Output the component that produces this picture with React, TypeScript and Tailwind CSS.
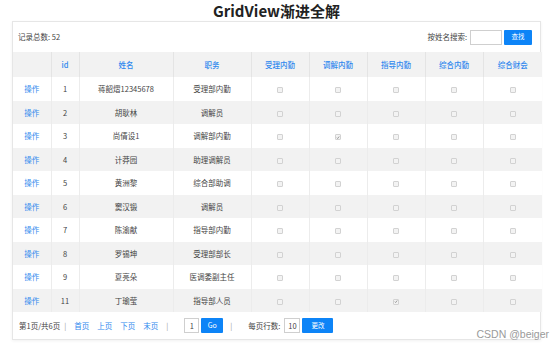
import React from "react";

const rows = [
  { id: 1, name: "蒋韶熠12345678", job: "受理部内勤", checks: [0, 0, 0, 0, 0] },
  { id: 2, name: "胡耿林", job: "调解员", checks: [0, 0, 0, 0, 0] },
  { id: 3, name: "尚倩设1", job: "调解部内勤", checks: [0, 1, 0, 0, 0] },
  { id: 4, name: "计莽园", job: "助理调解员", checks: [0, 0, 0, 0, 0] },
  { id: 5, name: "黄洲黎", job: "综合部助调", checks: [0, 0, 0, 0, 0] },
  { id: 6, name: "窦汉锻", job: "调解员", checks: [0, 0, 0, 0, 0] },
  { id: 7, name: "陈渝献", job: "指导部内勤", checks: [0, 0, 0, 0, 0] },
  { id: 8, name: "罗锡坤", job: "受理部部长", checks: [0, 0, 0, 0, 0] },
  { id: 9, name: "夏亮朵", job: "医调委副主任", checks: [0, 0, 0, 0, 0] },
  { id: 11, name: "丁瑜莹", job: "指导部人员", checks: [0, 0, 1, 0, 0] },
];

const heads = ["", "id", "姓名", "职务", "受理内勤", "调解内勤", "指导内勤", "综合内勤", "综合财会"];
const widths = [38, 28, 94, 78, 58, 58, 58, 58, 59];

const Check = ({ on }: { on: boolean }) => (
  <span className="inline-flex items-center justify-center w-[6px] h-[6px] border border-[#d2d2d2] bg-[#f3f3f3] rounded-[1px] align-middle">
    {on && (
      <svg width="5" height="5" viewBox="0 0 10 10">
        <path d="M2 5.5 L4 7.5 L8 2.5" fill="none" stroke="#777" strokeWidth="1.8" />
      </svg>
    )}
  </span>
);

const Sep = ({ className = "" }: { className?: string }) => (
  <span className={`text-[#9aa0a6] ${className}`}>|</span>
);

export default function App() {
  return (
    <div
      className="relative w-[554px] h-[348px] bg-white text-[#444] overflow-hidden"
      style={{ fontFamily: '"Noto Sans CJK SC", "Noto Sans", sans-serif' }}
    >
      <h1 className="h-[21px] pl-[12px] w-[541px] text-center text-[15px] font-bold leading-[22px] text-[#222]">
        GridView渐进全解
      </h1>

      <div className="ml-[12px] w-[529px] border border-[#e6e6e6] shadow-[0_1px_3px_rgba(0,0,0,0.06)] text-[7.5px]">
        <div className="h-[30px] flex items-center justify-between pl-[5px] pr-[8px]">
          <span>记录总数: 52</span>
          <div className="flex items-center">
            <span className="mr-[3px]">按姓名搜索:</span>
            <span className="w-[32px] h-[15px] border border-[#cfcfcf] bg-white" />
            <button className="ml-[2px] w-[28px] h-[15px] bg-[#0d84f7] text-white text-[6.5px] rounded-[1px]">
              查找
            </button>
          </div>
        </div>

        <table className="w-full table-fixed border-collapse">
          <colgroup>
            {widths.map((w, i) => (
              <col key={i} style={{ width: w }} />
            ))}
          </colgroup>
          <thead>
            <tr className="h-[25px] bg-[#f2f2f2]">
              {heads.map((h, i) => (
                <th
                  key={i}
                  className={`font-medium text-[#2f88ee] text-center ${i > 0 ? "border-l border-[#e4e4e4]" : ""}`}
                >
                  {h}
                </th>
              ))}
            </tr>
          </thead>
          <tbody>
            {rows.map((r, ri) => (
              <tr key={r.id} className={`h-[23.5px] ${ri % 2 === 1 ? "bg-[#f2f2f2]" : "bg-white"}`}>
                <td className="text-center text-[#2f88ee]">操作</td>
                <td className="text-center border-l border-[#ececec]">{r.id}</td>
                <td className="text-center border-l border-[#ececec]">{r.name}</td>
                <td className="text-center border-l border-[#ececec]">{r.job}</td>
                {r.checks.map((c, ci) => (
                  <td key={ci} className="text-center border-l border-[#ececec]">
                    <Check on={c === 1} />
                  </td>
                ))}
              </tr>
            ))}
          </tbody>
        </table>

        <div className="h-[27px] flex items-center pl-[6px]">
          <span>第1页/共6页</span>
          <Sep className="ml-[4px]" />
          <div className="flex gap-[8px] ml-[8px] text-[#2f88ee]">
            <span>首页</span>
            <span>上页</span>
            <span>下页</span>
            <span>末页</span>
          </div>
          <Sep className="ml-[8px]" />
          <span className="ml-[16px] w-[15px] h-[15px] border border-[#cfcfcf] flex items-center justify-center">1</span>
          <button className="ml-[2px] w-[22px] h-[15px] bg-[#0d84f7] text-white text-[7px] rounded-[1px]">
            Go
          </button>
          <Sep className="ml-[7px]" />
          <span className="ml-[16px]">每页行数:</span>
          <span className="ml-[4px] w-[16px] h-[15px] border border-[#cfcfcf] flex items-center justify-center">10</span>
          <button className="ml-[2px] w-[31px] h-[15px] bg-[#0d84f7] text-white text-[6.5px] rounded-[1px]">
            更改
          </button>
        </div>
      </div>

      <span
        className="absolute right-[5px] bottom-[5px] text-[10.5px] text-[#9a9a9a]"
        style={{ fontFamily: '"Liberation Sans", Arial, sans-serif' }}
      >
        CSDN @beiger
      </span>
    </div>
  );
}
